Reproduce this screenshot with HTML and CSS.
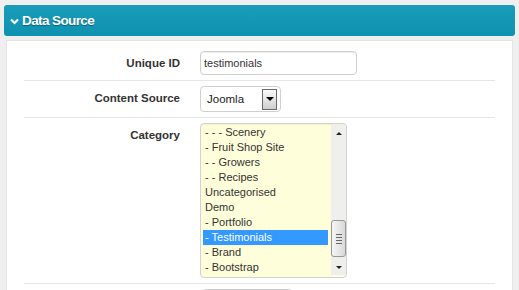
FILE: index.html
```html
<!DOCTYPE html>
<html lang="en">
<head>
    <meta charset="UTF-8" />
    <title>Data Source</title>
    <link rel="stylesheet" href="styles.css">
</head>
<body>
    <div class="panel-head">
        <svg class="chevron" width="9" height="7" viewBox="0 0 9 7">
            <path d="M1 1.5 L4.5 5 L8 1.5" fill="none" stroke="#fff" stroke-width="2.2" />
        </svg>
        <span>Data Source</span>
    </div>

    <div class="panel-body">
        <div class="row">
            <label class="row-label" for="unique-id">Unique ID</label>
            <input type="text" id="unique-id" class="text-input" value="testimonials" />
        </div>

        <div class="row">
            <label class="row-label">Content Source</label>
            <div class="fake-select">
                <span class="fake-select-value">Joomla</span>
                <span class="drop-btn"><i class="tri-down"></i></span>
            </div>
        </div>

        <div class="row">
            <label class="row-label">Category</label>
            <div class="listbox">
                <div class="list-items">
                    <div class="list-item">- - - Scenery</div>
                    <div class="list-item">- Fruit Shop Site</div>
                    <div class="list-item">- - Growers</div>
                    <div class="list-item">- - Recipes</div>
                    <div class="list-item">Uncategorised</div>
                    <div class="list-item">Demo</div>
                    <div class="list-item">- Portfolio</div>
                    <div class="list-item selected">- Testimonials</div>
                    <div class="list-item">- Brand</div>
                    <div class="list-item">- Bootstrap</div>
                </div>
                <div class="scrollbar">
                    <div class="sb-btn"><i class="sb-up"></i></div>
                    <div class="sb-track">
                        <div class="sb-thumb">
                            <span></span><span></span><span></span><span></span>
                        </div>
                    </div>
                    <div class="sb-btn"><i class="sb-down"></i></div>
                </div>
            </div>
        </div>

        <div class="row last">
            <label class="row-label"></label>
            <input type="text" class="text-input short" />
        </div>
    </div>
</body>
</html>
```

FILE: styles.css
```css
body {
    margin: 0;
    height: 290px;
    overflow: hidden;
    background-color: #efefef;
    font-family: 'Liberation Sans', Arial, sans-serif;
    color: #333;
}
.panel-head {
    display: flex;
    align-items: center;
    height: 31px;
    margin: 5px 4px 0;
    padding-left: 6px;
    border-radius: 3px;
    background: linear-gradient(#189cb9, #0f92af);
    color: #fff;
    font-weight: 700;
    font-size: 13.5px;
    letter-spacing: -0.6px;
    text-shadow: 0 1px 1px rgba(0,0,0,0.35);
}
.chevron {
    margin-right: 3px;
    margin-top: 1px;
}
.panel-body {
    box-sizing: border-box;
    height: 250px;
    overflow: hidden;
    margin: 4px 6px 0;
    padding: 5px 17px 0;
    background: #fff;
    border: 1px solid #e4e4e4;
    border-bottom: none;
}
.row {
    display: flex;
    align-items: flex-start;
    padding: 5px 0;
    border-bottom: 1px solid #e6e6e6;
}
.row.last {
    border-bottom: none;
}
.row-label {
    flex: none;
    width: 156px;
    margin-right: 20px;
    text-align: right;
    font-weight: 700;
    font-size: 11.5px;
    line-height: 24px;
    color: #333;
}
.text-input {
    box-sizing: border-box;
    width: 157px;
    height: 24px;
    padding: 0 3px;
    margin: 0;
    border: 1px solid #cfcfcf;
    border-radius: 4px;
    box-shadow: inset 0 1px 1px rgba(0,0,0,0.07);
    font-family: 'Liberation Sans', Arial, sans-serif;
    font-size: 11px;
    color: #333;
    outline: none;
}
.text-input.short {
    width: 91px;
    margin-left: 2px;
}
.fake-select {
    box-sizing: border-box;
    display: flex;
    align-items: center;
    width: 81px;
    height: 26px;
    border: 1px solid #d0d0d0;
    border-radius: 4px;
    background: #fff;
    font-size: 11.5px;
}
.fake-select-value {
    flex: 1;
    padding-left: 6px;
    color: #222;
}
.drop-btn {
    box-sizing: border-box;
    display: flex;
    align-items: center;
    justify-content: center;
    width: 15px;
    height: 21px;
    margin-right: 3px;
    border: 1px solid #6a6a6a;
    background: linear-gradient(#fbfbfb, #cfcfcf);
}
.tri-down {
    width: 0;
    height: 0;
    border-left: 4px solid transparent;
    border-right: 4px solid transparent;
    border-top: 4px solid #000;
}
.listbox {
    box-sizing: border-box;
    display: flex;
    width: 147px;
    height: 155px;
    padding: 1px 0 2px 2px;
    border: 1px solid #d2d2d2;
    border-radius: 4px;
    background: #fffedb;
    box-shadow: inset 0 1px 1px rgba(0,0,0,0.05);
}
.list-items {
    width: 125px;
    margin-right: 3px;
}
.list-item {
    height: 15px;
    line-height: 15px;
    padding-left: 2px;
    font-size: 11px;
    color: #333;
    white-space: nowrap;
}
.list-item.selected {
    background: #3399ff;
    color: #fff;
}
.scrollbar {
    display: flex;
    flex-direction: column;
    width: 15px;
    background: #efefed;
}
.sb-btn {
    display: flex;
    align-items: center;
    justify-content: center;
    height: 16px;
}
.sb-up {
    width: 0;
    height: 0;
    border-left: 3px solid transparent;
    border-right: 3px solid transparent;
    border-bottom: 3px solid #222;
}
.sb-down {
    width: 0;
    height: 0;
    border-left: 3px solid transparent;
    border-right: 3px solid transparent;
    border-top: 3px solid #222;
}
.sb-track {
    flex: 1;
    display: flex;
    flex-direction: column;
}
.sb-thumb {
    box-sizing: border-box;
    display: flex;
    flex-direction: column;
    align-items: center;
    justify-content: center;
    gap: 2px;
    height: 37px;
    margin: auto 0 2px;
    border: 1px solid #979797;
    border-radius: 3px;
    background: linear-gradient(to right, #f6f6f6, #d9d9d9);
}
.sb-thumb span {
    display: block;
    width: 6px;
    height: 1px;
    background: #666;
}
```
